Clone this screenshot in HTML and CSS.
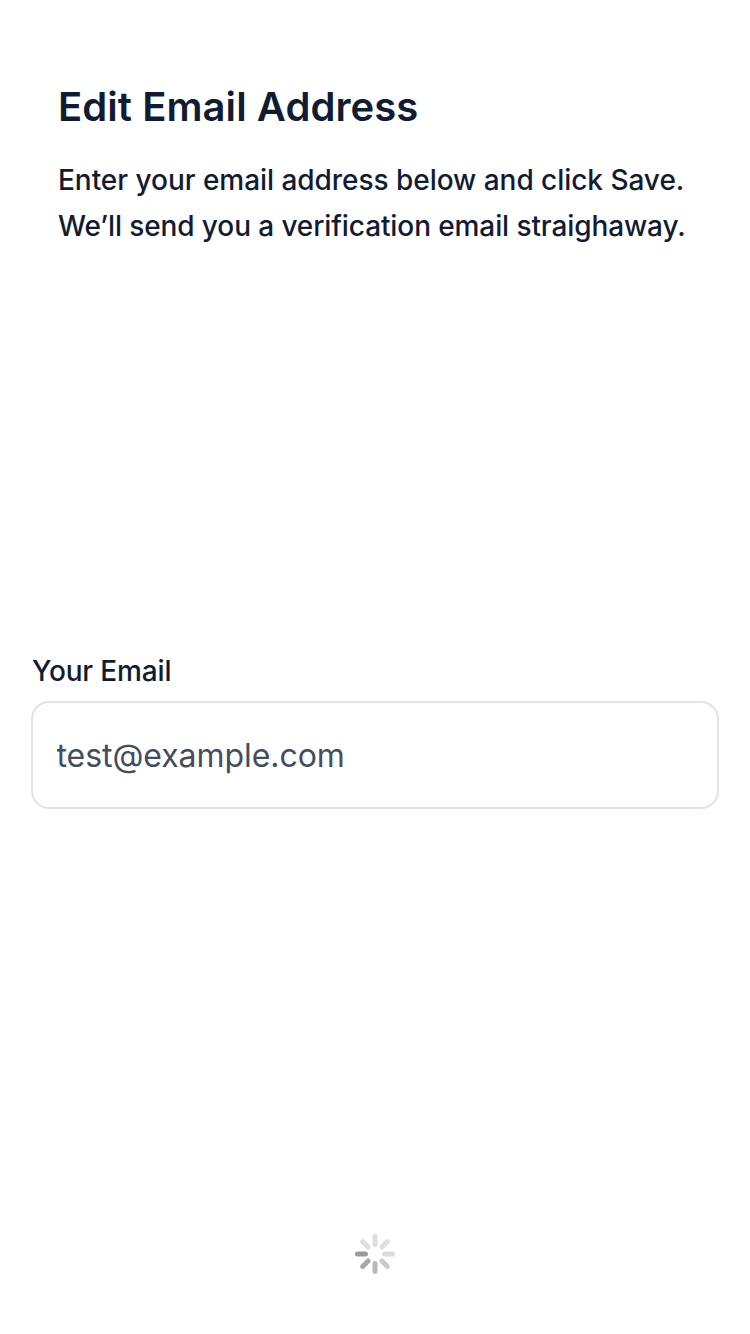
FILE: index.html
```html
<!DOCTYPE html>
<html lang="en">
<head>
<meta charset="utf-8">
<title>Edit Email Address</title>
<link rel="stylesheet" href="styles.css">
</head>
<body>
<main class="screen">
  <header class="intro">
    <h1 class="title">Edit Email Address</h1>
    <p class="description">Enter your email address below and click Save.<br><span class="followup">We’ll send you a verification email straighaway.</span></p>
  </header>
  <form class="form">
    <label class="label" for="email">Your Email</label>
    <input class="field" id="email" type="email" value="test@example.com">
  </form>
  <svg class="spinner" viewBox="0 0 40 40" fill="none" stroke-width="5" stroke-linecap="round" role="img" aria-label="Loading">
    <path d="M20 2.5v8" stroke="#dedede"/>
    <path d="M32.4 7.6l-5.5 5.5" stroke="#dedede"/>
    <path d="M37.5 20h-8" stroke="#dcdcdc"/>
    <path d="M32.4 32.4l-5.5-5.5" stroke="#cacaca"/>
    <path d="M20 37.5v-8" stroke="#bababa"/>
    <path d="M7.6 32.4l5.5-5.5" stroke="#a8a8a8"/>
    <path d="M2.5 20h8" stroke="#9a9a9c"/>
    <path d="M7.6 7.6l5.5 5.5" stroke="#dedede"/>
  </svg>
</main>
</body>
</html>
```
FILE: styles.css
```css
* { box-sizing: border-box; }
body { margin: 0; background: #fff; color: #111c33; font-family: Inter, sans-serif; }
.screen { height: 1334px; padding: 82px 31px 60px; display: flex; flex-direction: column; }
.intro { padding: 0 27px; height: 569px; }
.title { margin: 0; font-size: 40px; line-height: 50px; font-weight: 600; letter-spacing: 0.07px; white-space: nowrap; }
.description { margin: 25px 0 0; font-size: 28px; line-height: 46px; font-weight: 500; letter-spacing: -0.04px; white-space: nowrap; }
.followup { letter-spacing: -0.1px; }
.form { display: flex; flex-direction: column; }
.label { padding-left: 1px; height: 50px; font-size: 28px; line-height: 40px; font-weight: 500; letter-spacing: -0.15px; }
.field { height: 108px; padding: 0 23.5px; border: 2px solid #dfe3ee; border-radius: 18px; background: #fff; color: #444d60; font: 400 32px Inter, sans-serif; letter-spacing: -0.06px; outline: none; }
.spinner { width: 40px; height: 40px; margin: auto auto 0; }
```
